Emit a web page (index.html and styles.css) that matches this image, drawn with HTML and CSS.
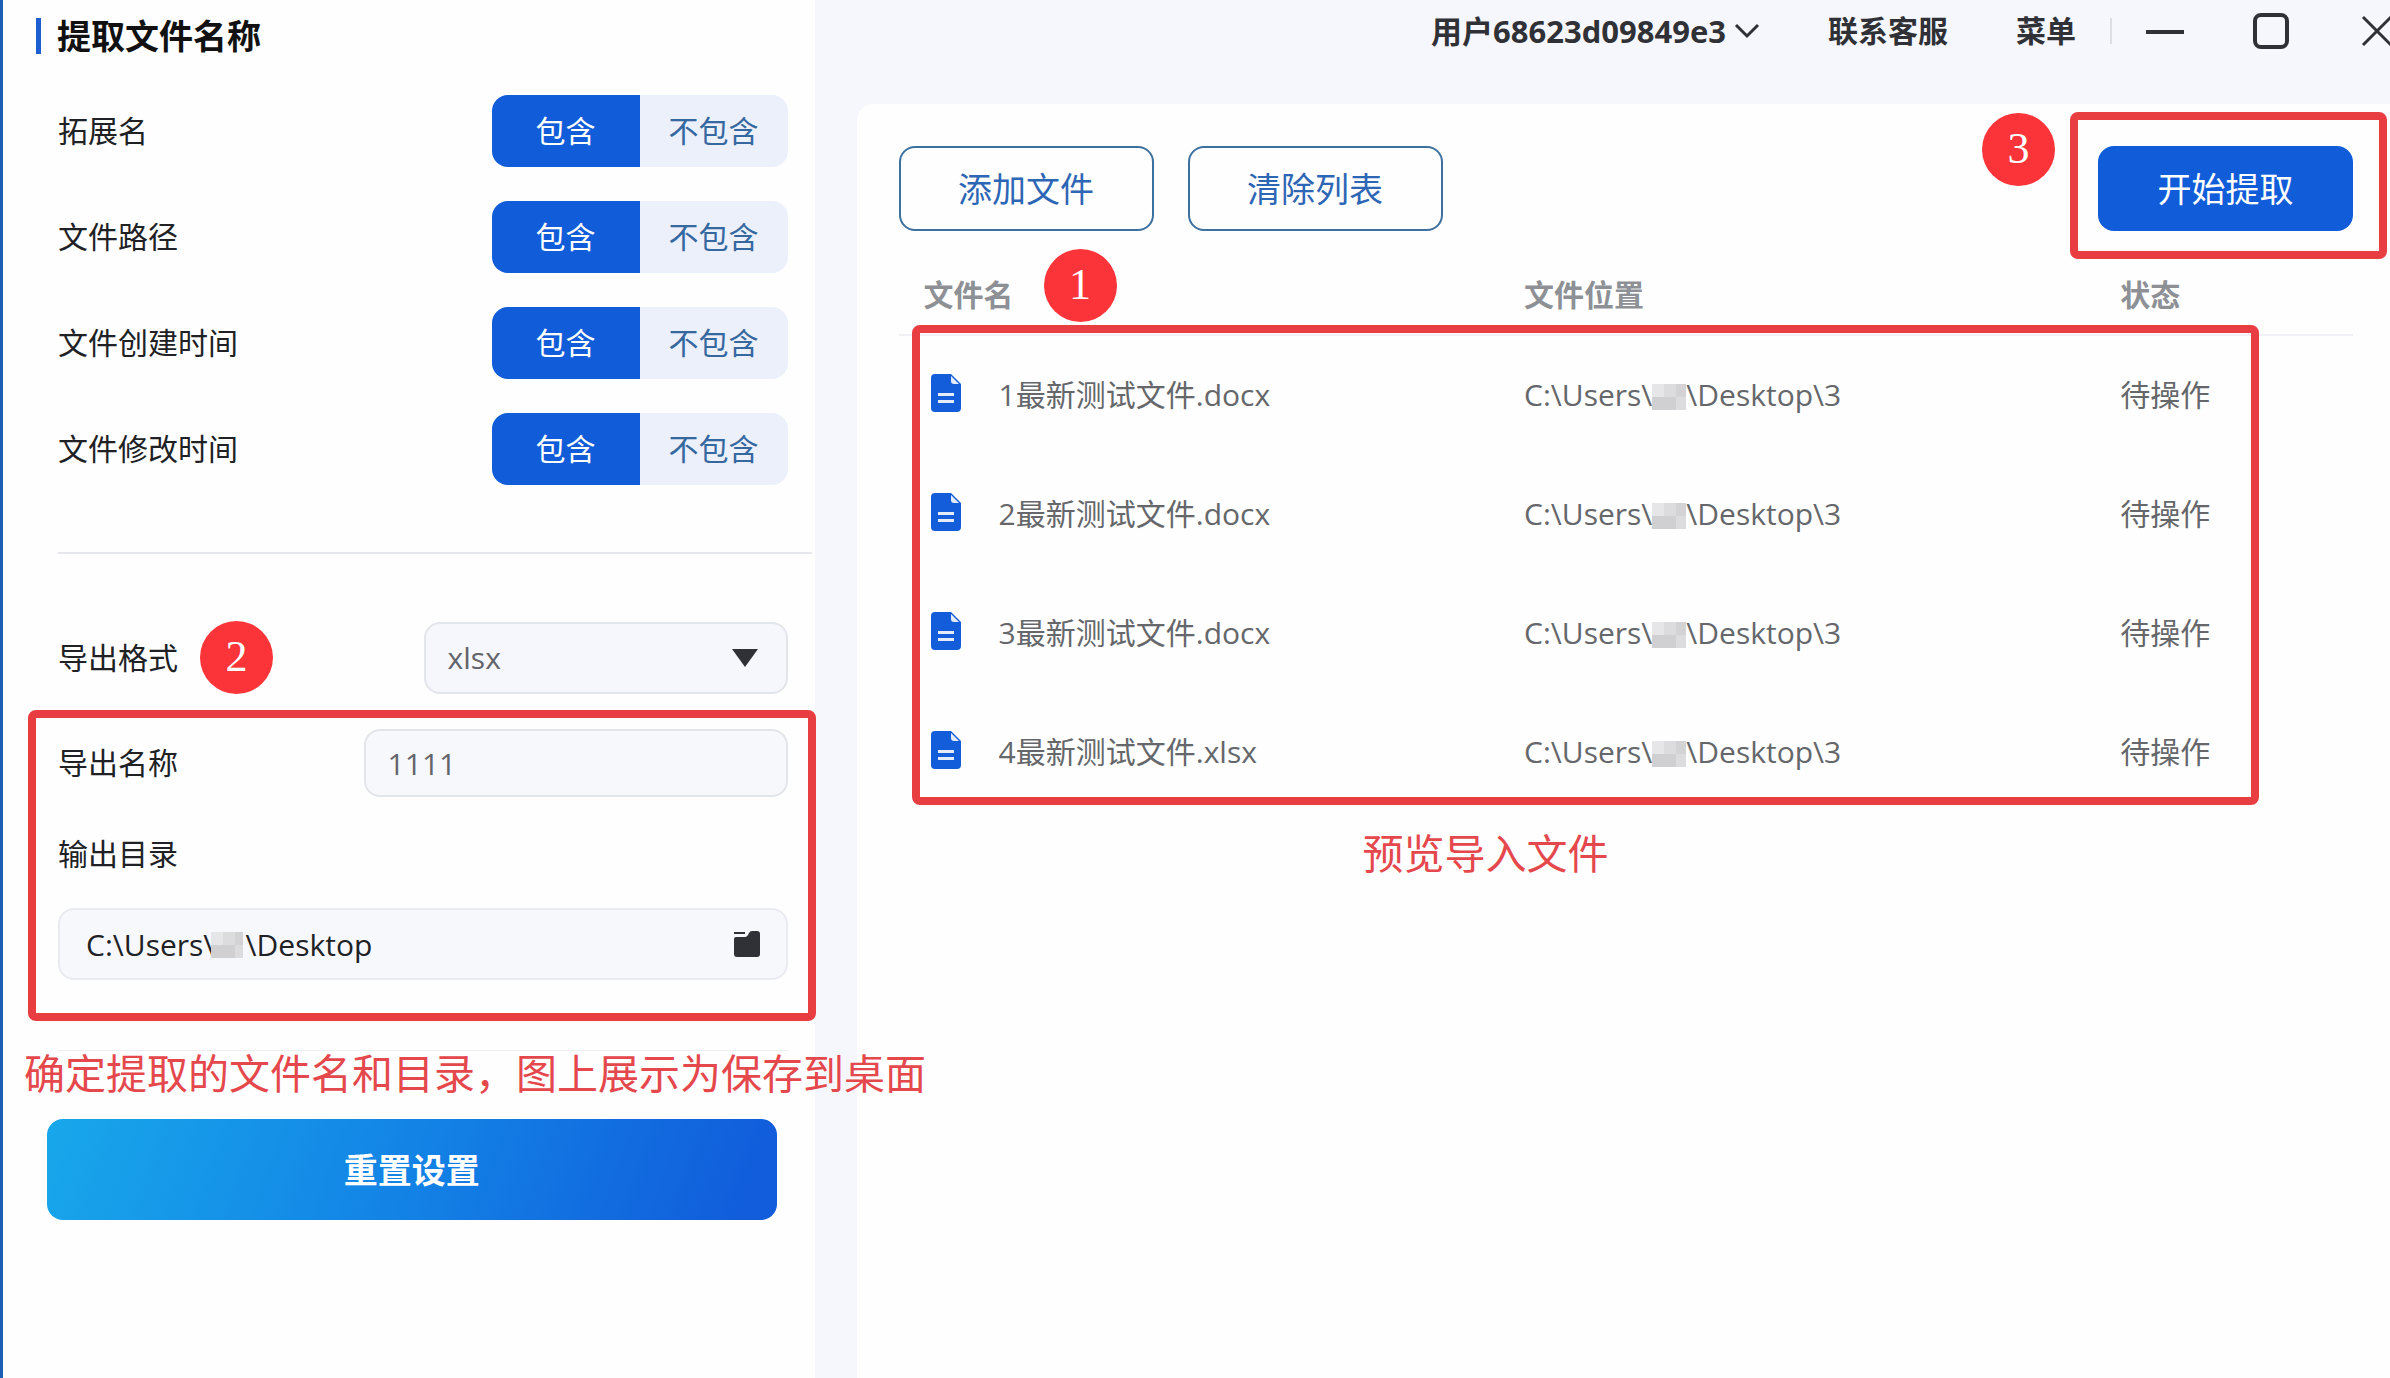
FILE: index.html
```html
<!DOCTYPE html>
<html lang="zh-CN">
<head>
<meta charset="utf-8">
<meta name="viewport" content="width=device-width, initial-scale=1">
<title>提取文件名称</title>
<link rel="stylesheet" href="styles.css">
</head>
<body>
<svg class="defs" aria-hidden="true">
  <symbol id="doc" viewBox="0 0 30 38">
    <path fill="#135ddb" d="M4 0H20L30 10V34a4 4 0 0 1-4 4H4a4 4 0 0 1-4-4V4a4 4 0 0 1 4-4z"/>
    <path fill="#e4ecfa" d="M20 2L28 10H23a3 3 0 0 1-3-3z"/>
    <path stroke="#e4ecfa" stroke-width="3" d="M7 20.500H23M7 27.500H23"/>
  </symbol>
</svg>
<div class="app">
  <aside class="sidebar">
    <h1 class="title">提取文件名称</h1>
    <form class="settings">
      <div class="options">
        <div class="row" role="radiogroup" aria-labelledby="l-ext">
          <span id="l-ext">拓展名</span>
          <div class="toggle">
            <label><input type="radio" name="ext" checked>包含</label>
            <label><input type="radio" name="ext">不包含</label>
          </div>
        </div>
        <div class="row" role="radiogroup" aria-labelledby="l-path">
          <span id="l-path">文件路径</span>
          <div class="toggle">
            <label><input type="radio" name="path" checked>包含</label>
            <label><input type="radio" name="path">不包含</label>
          </div>
        </div>
        <div class="row" role="radiogroup" aria-labelledby="l-created">
          <span id="l-created">文件创建时间</span>
          <div class="toggle">
            <label><input type="radio" name="created" checked>包含</label>
            <label><input type="radio" name="created">不包含</label>
          </div>
        </div>
        <div class="row" role="radiogroup" aria-labelledby="l-modified">
          <span id="l-modified">文件修改时间</span>
          <div class="toggle">
            <label><input type="radio" name="modified" checked>包含</label>
            <label><input type="radio" name="modified">不包含</label>
          </div>
        </div>
      </div>
      <hr class="divider">
      <div class="row format">
        <label for="format">导出格式</label>
        <span class="badge badge-two">2</span>
        <div class="select">
          <select id="format"><option>xlsx</option></select>
          <svg class="caret" viewBox="0 0 26 18" aria-hidden="true"><path fill="#303136" d="M0 0H26L13 18z"/></svg>
        </div>
      </div>
      <div class="output">
        <div class="row">
          <label for="name">导出名称</label>
          <input class="field name" id="name" type="text" value="1111">
        </div>
        <label class="dir-label" for="dir">输出目录</label>
        <div class="dir">
          <input class="field" id="dir" type="text" value="C:\Users\    \Desktop">
          <span class="mosaic dir-mosaic"></span>
          <button class="folder" type="button" aria-label="选择目录">
            <svg viewBox="0 0 26 26" aria-hidden="true"><path fill="#303136" d="M0 1H11V3H0zM0 8q0-2 2-2H11q2 0 3-2L15 2q1-2 3-2h5q3 0 3 3V23q0 3-3 3H3q-3 0-3-3z"/></svg>
          </button>
        </div>
        <div class="mark mark-output"></div>
      </div>
      <div class="footer">
        <p class="note note-output">确定提取的文件名和目录，图上展示为保存到桌面</p>
        <button class="reset" type="reset">重置设置</button>
      </div>
    </form>
  </aside>

  <div class="content">
    <header class="topbar">
      <button class="user" type="button">用户68623d09849e3
        <svg viewBox="0 0 26 16" aria-hidden="true"><path fill="none" stroke="#303136" stroke-width="3" d="M2 2L13 13L24 2"/></svg>
      </button>
      <a class="support" href="#">联系客服</a>
      <a class="menu" href="#">菜单</a>
      <span class="sep"></span>
      <div class="window">
        <button type="button" aria-label="最小化"><svg viewBox="0 0 38 38"><path stroke="#303136" stroke-width="4" d="M0 20H38"/></svg></button>
        <button type="button" aria-label="最大化"><svg viewBox="0 0 38 38"><rect x="3" y="3" width="32" height="32" rx="6" fill="none" stroke="#303136" stroke-width="4"/></svg></button>
        <button type="button" aria-label="关闭"><svg viewBox="0 0 38 38"><path stroke="#303136" stroke-width="3" d="M5 5L33 33M33 5L5 33"/></svg></button>
      </div>
    </header>

    <main class="panel">
      <div class="actions">
        <button class="btn" type="button">添加文件</button>
        <button class="btn" type="button">清除列表</button>
        <div class="start">
          <button class="btn primary" type="button">开始提取</button>
          <div class="mark mark-start"></div>
          <span class="badge badge-three">3</span>
        </div>
      </div>
      <div class="list">
        <table class="files">
          <thead>
            <tr><th class="c-name" scope="col">文件名</th><th class="c-path" scope="col">文件位置</th><th scope="col">状态</th></tr>
          </thead>
          <tbody>
            <tr><td><div class="file"><svg><use href="#doc"/></svg>1最新测试文件.docx</div></td><td>C:\Users\<span class="mosaic"></span>\Desktop\3</td><td>待操作</td></tr>
            <tr><td><div class="file"><svg><use href="#doc"/></svg>2最新测试文件.docx</div></td><td>C:\Users\<span class="mosaic"></span>\Desktop\3</td><td>待操作</td></tr>
            <tr><td><div class="file"><svg><use href="#doc"/></svg>3最新测试文件.docx</div></td><td>C:\Users\<span class="mosaic"></span>\Desktop\3</td><td>待操作</td></tr>
            <tr><td><div class="file"><svg><use href="#doc"/></svg>4最新测试文件.xlsx</div></td><td>C:\Users\<span class="mosaic"></span>\Desktop\3</td><td>待操作</td></tr>
          </tbody>
        </table>
        <div class="mark mark-list"></div>
        <span class="badge badge-one">1</span>
      </div>
      <p class="note note-list">预览导入文件</p>
    </main>
  </div>
</div>
</body>
</html>
```
FILE: styles.css
```css
* { box-sizing: border-box; }

body {
  margin: 0;
  background: #f5f7fc;
  color: #202124;
  font: 30px/44px "Open Sans", "Noto Sans CJK SC", sans-serif;
}

button, input, select { font: inherit; color: inherit; }
button { padding: 0; border: 0; background: none; }
a { color: inherit; text-decoration: none; }
svg { display: block; }
.defs { position: absolute; width: 0; height: 0; }

.app {
  display: flex;
  min-height: 100vh;
  overflow: hidden;
}

/* Sidebar */
.sidebar {
  position: relative;
  z-index: 1;
  flex: 0 0 calc(34% + 2px);
  min-width: 0;
  padding: 18px 27px 40px 33px;
  border-left: 3px solid #1b5cb4;
  background: #fefefe;
}

.title {
  margin: 0;
  padding-left: 16px;
  border-left: 5px solid #1d5fd0;
  font-size: 34px;
  line-height: 36px;
  color: #111;
}

.settings { margin: 41px 0 0 22px; }
.options { display: grid; gap: 34px; }

.row {
  display: flex;
  align-items: center;
  justify-content: space-between;
}

.toggle {
  display: grid;
  grid-template-columns: 1fr 1fr;
  width: 296px;
  height: 72px;
  overflow: hidden;
  border-radius: 16px;
  background: #ecf0fb;
  color: #35689f;
}
.toggle label {
  display: flex;
  align-items: center;
  justify-content: center;
}
.toggle input {
  position: absolute;
  opacity: 0;
}
.toggle label:has(:checked) {
  background: #115cd9;
  color: #fff;
}

.divider {
  height: 2px;
  margin: 67px -24px 67px 0;
  border: 0;
  background: #e6e7ea;
}

.format { justify-content: flex-start; }
.select { position: relative; width: 364px; margin-left: auto; }
.select select {
  display: block;
  width: 100%;
  height: 72px;
  padding: 0 22px;
  border: 2px solid #e2e5ea;
  border-radius: 16px;
  background: #f6f7fc;
  color: #63656b;
  appearance: none;
}
.caret {
  position: absolute;
  top: 27px;
  right: 30px;
  width: 26px;
  height: 18px;
  pointer-events: none;
}

.output { position: relative; margin-top: 35px; }
.field {
  display: block;
  width: 100%;
  height: 72px;
  padding: 0 26px;
  border: 2px solid #e9ebf0;
  border-radius: 16px;
  background: #f7f8fc;
}
.field.name {
  width: 424px;
  height: 68px;
  padding: 0 22px;
  border-color: #e2e5ea;
  color: #63656b;
}
.dir-label { display: block; margin: 35px 0 32px; }
.dir { position: relative; }
.folder {
  position: absolute;
  top: 23px;
  right: 28px;
  width: 26px;
  height: 26px;
}

.mosaic {
  display: inline-block;
  width: 34px;
  height: 26px;
  vertical-align: -4px;
  background:
    linear-gradient(#d3d3d5, #d3d3d5) 24px 0 / 12px 13px no-repeat,
    linear-gradient(#e6e6e8, #e6e6e8) 0 0 / 12px 13px no-repeat,
    linear-gradient(#d0d0d2, #d0d0d2) 0 13px / 24px 13px no-repeat,
    #dcdcde;
}
.dir-mosaic {
  position: absolute;
  top: 24px;
  left: 153px;
  width: 32px;
}

.footer {
  position: relative;
  margin-top: 70px;
  padding-top: 68px;
  border-top: 1px solid #eceef1;
}
.reset {
  display: block;
  width: 100%;
  height: 101px;
  margin-left: -11px;
  border-radius: 16px;
  background: linear-gradient(110deg, #18a7ea 0%, #1384e6 48%, #115ddb 95%);
  color: #fff;
  font-size: 34px;
  font-weight: 700;
}

/* Header */
.content {
  display: flex;
  flex: 1;
  flex-direction: column;
  min-width: 0;
  padding-left: 42px;
}
.topbar {
  display: flex;
  align-items: center;
  justify-content: flex-end;
  height: 62px;
  margin-bottom: 42px;
  color: #303136;
  font-weight: 700;
  white-space: nowrap;
}
.user { display: flex; align-items: center; gap: 8px; font-size: 31px; }
.user svg { width: 26px; height: 16px; }
.support { margin-left: 68px; }
.menu { margin-left: 68px; }
.sep {
  width: 2px;
  height: 26px;
  margin-left: 34px;
  background: #dcdee4;
}
.window { display: flex; gap: 68px; margin: 0 -6px 0 34px; }
.window svg { width: 38px; height: 38px; }

/* Main panel */
.panel {
  flex: 1;
  padding: 42px 37px 40px 42px;
  border-radius: 16px 0 0 0;
  background: #fefefe;
}
.actions { display: flex; gap: 34px; }
.btn {
  width: 255px;
  height: 85px;
  border: 2px solid #3d6f9f;
  border-radius: 16px;
  color: #2d66b5;
  font-size: 34px;
}
.btn.primary {
  border-color: #115cd9;
  background: #115cd9;
  color: #fff;
}
.start { position: relative; margin-left: auto; }

.list { position: relative; margin-top: 42px; }
.files {
  width: 100%;
  border-collapse: collapse;
  table-layout: fixed;
  color: #65676b;
}
.files th {
  padding: 0 0 17px;
  border-bottom: 2px solid #f0f1f4;
  color: #8d9095;
  text-align: left;
}
.files .c-name { width: 43%; padding-left: 25px; }
.files .c-path { width: 41%; }
.files td { height: 119px; padding: 0; }
.file {
  display: flex;
  align-items: center;
  gap: 38px;
  padding-left: 32px;
}
.file svg { width: 30px; height: 38px; margin-bottom: 4px; }

/* Tutorial marks drawn over the window */
.mark {
  position: absolute;
  border: 8px solid #e83d41;
  border-radius: 8px;
  pointer-events: none;
}
.mark-output { inset: -19px -28px -41px -30px; }
.mark-start { inset: -34px -34px -28px -28px; }
.mark-list { inset: 52px 94px 6px 13px; }

.badge {
  width: 73px;
  height: 73px;
  border-radius: 50%;
  background: #fb3439;
  color: #fff;
  font: 44px/71px "Liberation Serif", serif;
  text-align: center;
}
.badge-two { margin-left: 22px; }
.badge-one { position: absolute; top: -24px; left: 145px; }
.badge-three { position: absolute; top: -33px; left: -116px; }

.note {
  margin: 0;
  color: #e5484c;
  font-size: 41px;
  line-height: 60px;
  white-space: nowrap;
}
.note-output { position: absolute; top: -8px; left: -34px; }
.note-list { margin-top: 12px; padding-left: 464px; }
```
